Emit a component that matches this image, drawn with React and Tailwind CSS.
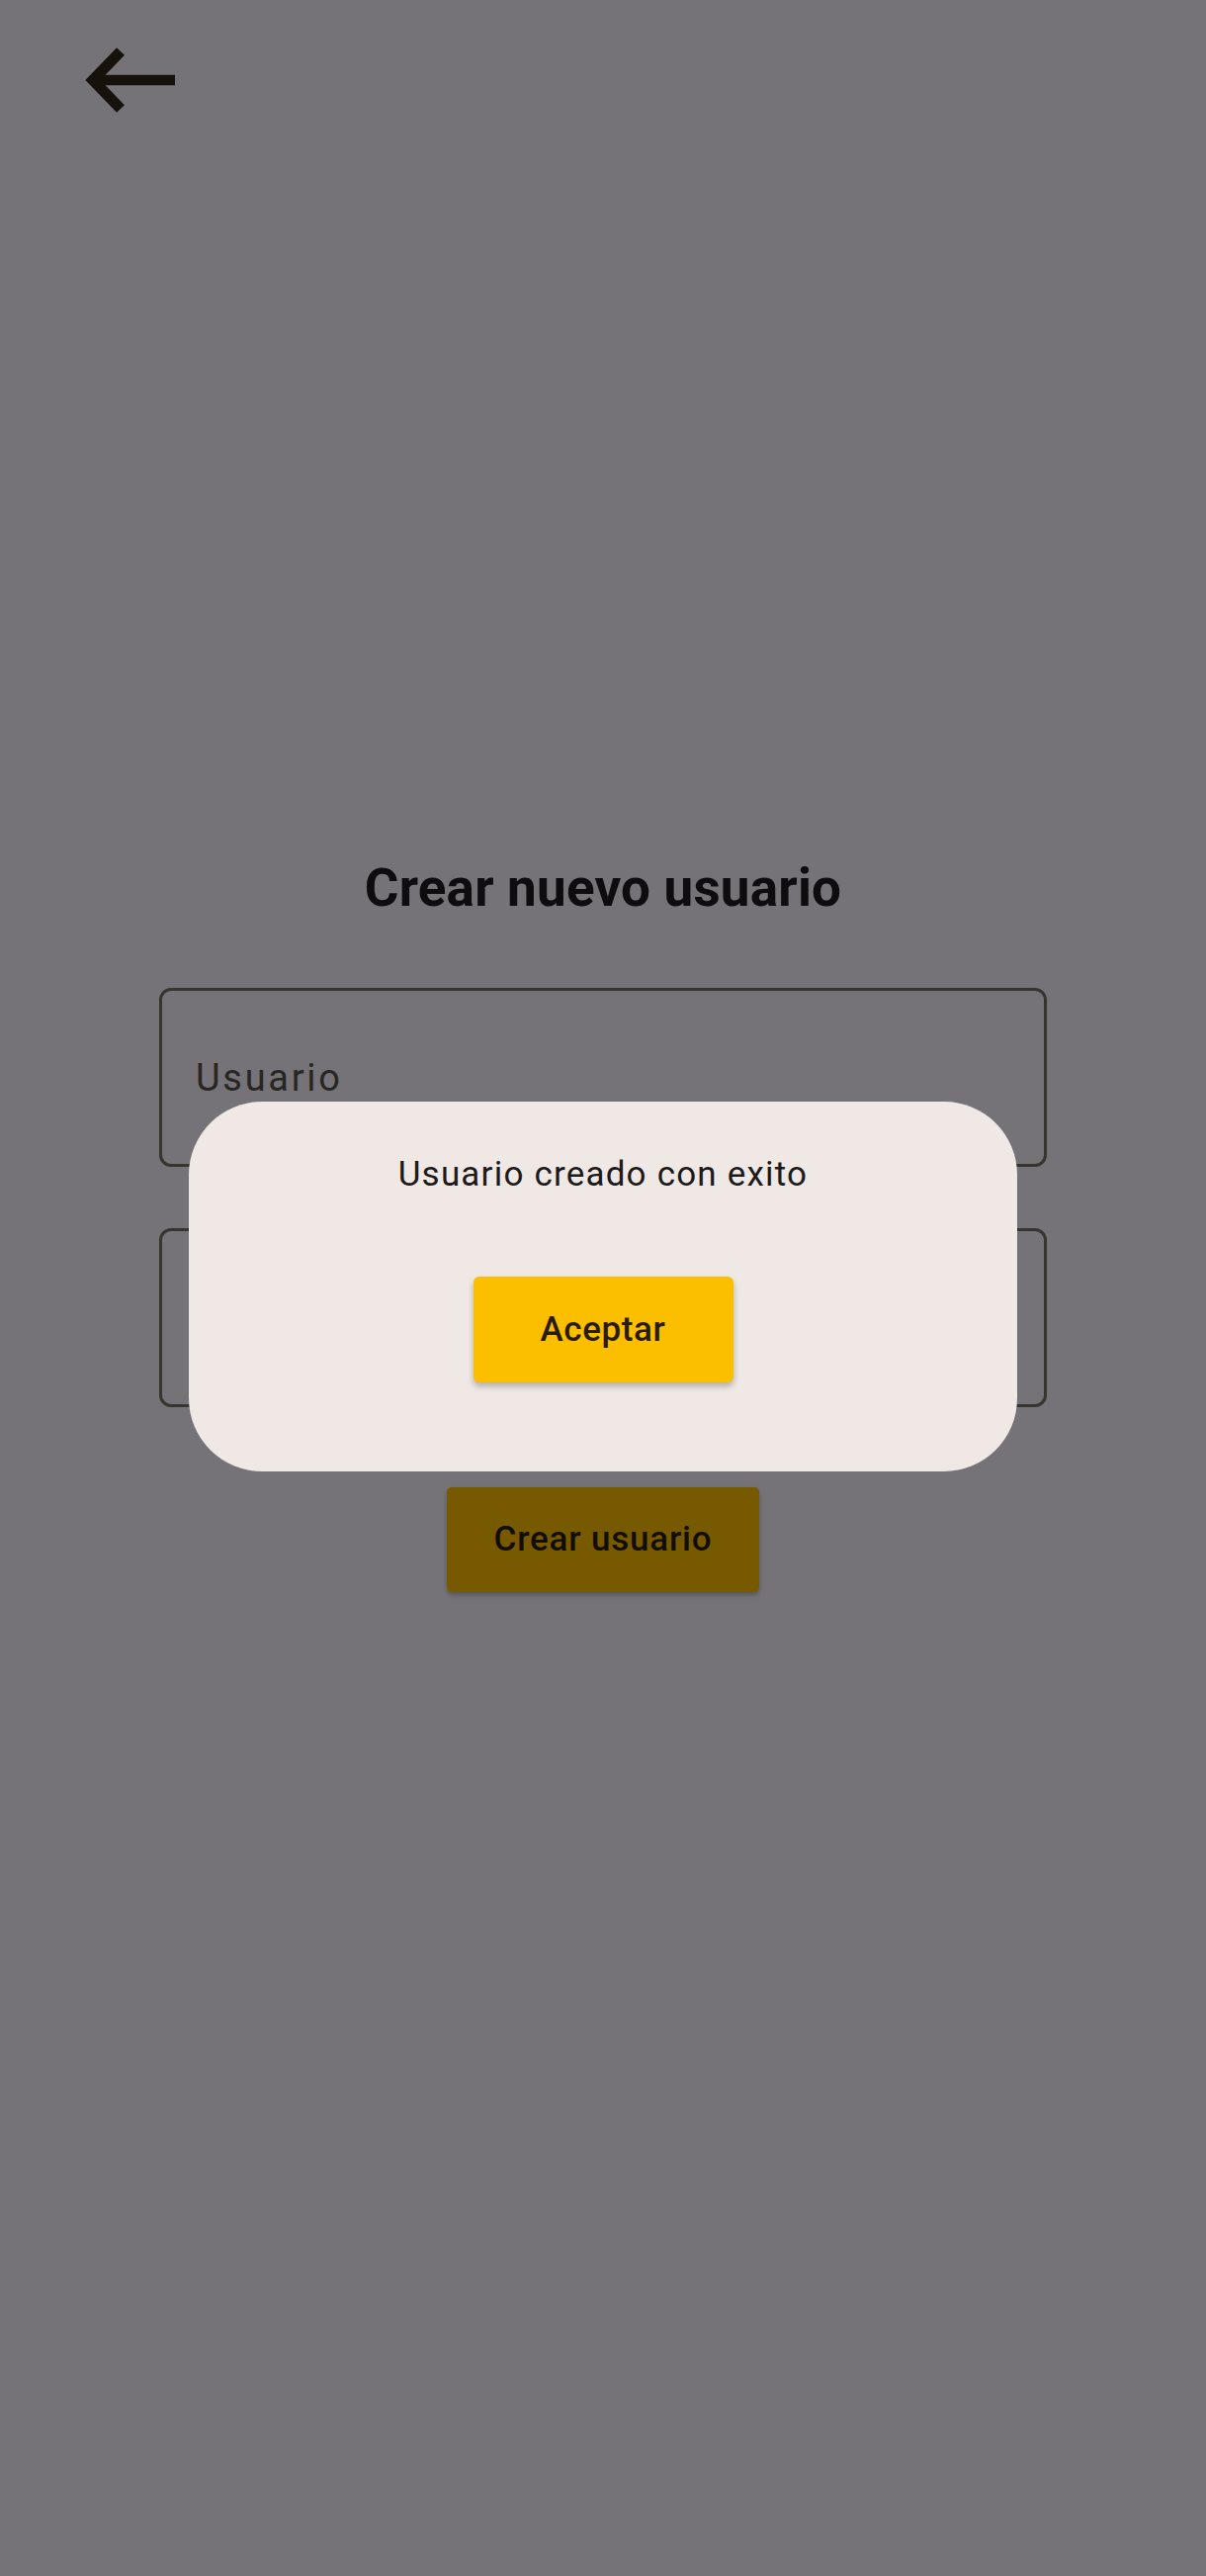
import React from "react";

function BackArrow() {
  return (
    <svg width="100" height="70" viewBox="0 0 100 70" fill="none" aria-label="Volver">
      <path d="M39 6 L11 35 L39 64" stroke="#16120b" strokeWidth="11" strokeLinejoin="miter" strokeLinecap="butt" />
      <path d="M12 35 H94" stroke="#16120b" strokeWidth="10.5" strokeLinecap="butt" />
    </svg>
  );
}

function OutlinedField({ label }) {
  return (
    <div className="h-[181px] w-full rounded-[12px] border-[3px] border-[#37352f] pl-[34px] pt-[65px]">
      <span className="block text-[38px] leading-[46px] tracking-[2.7px] text-[#282622]">{label}</span>
    </div>
  );
}

export default function App() {
  return (
    <div
      className="relative min-h-[2605px] w-full bg-[#757377]"
      style={{ fontFamily: "Roboto, 'Noto Sans', 'Liberation Sans', sans-serif" }}
    >
      {/* Page (under scrim) */}
      <header className="pl-[83px] pt-[46px]">
        <button className="block h-[70px] w-[100px]">
          <BackArrow />
        </button>
      </header>

      <main className="flex flex-col items-center px-[161px]">
        <h1 className="mt-[751px] text-[53px] font-bold leading-[63px] tracking-[0.2px] text-[#0e0c0f]">
          Crear nuevo usuario
        </h1>

        <div className="mt-[69px] flex w-full flex-col gap-[62px]">
          <OutlinedField label="Usuario" />
          <OutlinedField label="Contraseña" />
        </div>

        <button className="mt-[81px] flex h-[106px] w-[316px] items-center justify-center rounded-[5px] bg-[#775a00] shadow-[0_3px_4px_rgba(0,0,0,0.25)]">
          <span className="text-[35px] font-medium leading-[42px] tracking-[0.8px] text-[#120d05]">
            Crear usuario
          </span>
        </button>
      </main>

      {/* Dialog over scrim */}
      <div className="absolute left-[191px] top-[1114px] flex h-[374px] w-[838px] flex-col items-center rounded-[74px] bg-[#efe8e4] pt-[53px]">
        <p className="text-[35px] leading-[42px] tracking-[1.2px] text-[#1c1a1a]">
          Usuario creado con exito
        </p>
        <button className="mt-[82px] flex h-[107px] w-[263px] items-center justify-center rounded-[6px] bg-[#fbbf00] shadow-[0_4px_6px_rgba(0,0,0,0.25)]">
          <span className="text-[35px] font-medium leading-[42px] tracking-[0.6px] text-[#2a1c08]">
            Aceptar
          </span>
        </button>
      </div>
    </div>
  );
}
